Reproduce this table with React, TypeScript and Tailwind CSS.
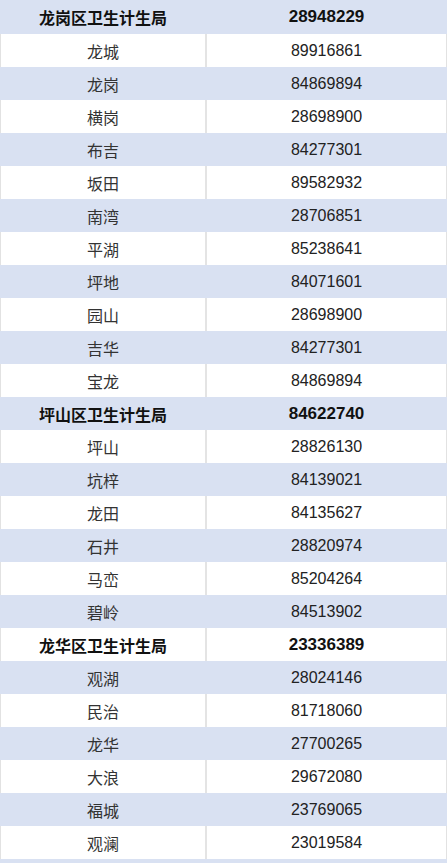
const rows: [string, string, boolean?][] = [
  ['龙岗区卫生计生局', '28948229', true],
  ['龙城', '89916861'],
  ['龙岗', '84869894'],
  ['横岗', '28698900'],
  ['布吉', '84277301'],
  ['坂田', '89582932'],
  ['南湾', '28706851'],
  ['平湖', '85238641'],
  ['坪地', '84071601'],
  ['园山', '28698900'],
  ['吉华', '84277301'],
  ['宝龙', '84869894'],
  ['坪山区卫生计生局', '84622740', true],
  ['坪山', '28826130'],
  ['坑梓', '84139021'],
  ['龙田', '84135627'],
  ['石井', '28820974'],
  ['马峦', '85204264'],
  ['碧岭', '84513902'],
  ['龙华区卫生计生局', '23336389', true],
  ['观湖', '28024146'],
  ['民治', '81718060'],
  ['龙华', '27700265'],
  ['大浪', '29672080'],
  ['福城', '23769065'],
  ['观澜', '23019584'],
  ['', ''],
]

export default function App() {
  return (
    <div className="w-[447px] h-[863px] overflow-hidden bg-white">
      {rows.map(([name, phone, head], i) => {
        const blue = i % 2 === 0
        return (
          <div
            key={i}
            className={`grid grid-cols-[206px_1fr] ${i === 0 ? 'h-[34px]' : 'h-[33px]'} ${
              blue ? 'bg-[#d9e1f2]' : 'bg-white border-l border-r border-[#e2e2e2]'
            }`}
          >
            <div
              className={`flex items-center justify-center text-[16px] ${
                head ? 'font-bold text-[#111]' : 'text-[#333]'
              } ${blue ? '' : 'border-r-2 border-[#e4e4e4]'}`}
              style={{ fontFamily: '"Noto Sans CJK SC", sans-serif' }}
            >
              {name}
            </div>
            <div
              className={`flex items-center justify-center ${
                head ? 'text-[17px] font-bold text-[#111]' : 'text-[16px] text-[#222]'
              }`}
              style={{ fontFamily: '"Liberation Sans", Arial, sans-serif' }}
            >
              {phone}
            </div>
          </div>
        )
      })}
    </div>
  )
}
